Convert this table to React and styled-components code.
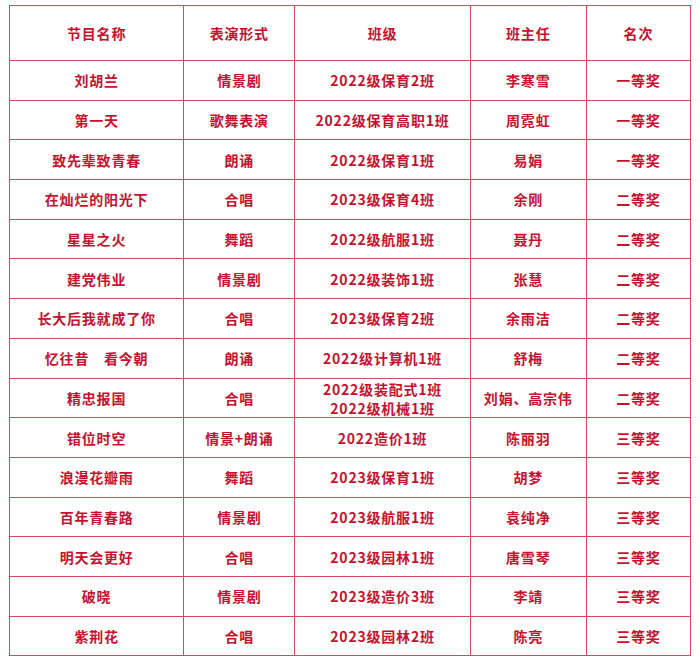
import React from 'react'
import styled, { createGlobalStyle } from 'styled-components'

const GlobalStyle = createGlobalStyle`
  body {
    margin: 0;
    background: #fff;
    font-family: "Noto Sans CJK SC", "Liberation Sans", sans-serif;
  }
`

const Page = styled.div`
  padding: 5px 0 0 9px;
`

const Table = styled.table`
  border-collapse: collapse;
  table-layout: fixed;
  width: 682px;
  color: #c8102e;
  font-size: 14px;
  letter-spacing: 0.8px;
`

const HeadCell = styled.th`
  height: 54px;
  border: 1.5px solid #d8475f;
  font-weight: 600;
  text-align: center;
  padding: 0;
`

const Cell = styled.td`
  height: ${p => p.$h}px;
  border: 1.5px solid #d8475f;
  text-align: center;
  padding: 0;
  font-weight: 600;
  line-height: 20px;
  white-space: nowrap;
`

const Line = styled.div`
  line-height: 20px;
  height: 19px;
`

const columns = [
  { title: '节目名称', width: 174 },
  { title: '表演形式', width: 111 },
  { title: '班级', width: 175 },
  { title: '班主任', width: 116 },
  { title: '名次', width: 104 },
]

const rows = [
  ['刘胡兰', '情景剧', '2022级保育2班', '李寒雪', '一等奖'],
  ['第一天', '歌舞表演', '2022级保育高职1班', '周霓虹', '一等奖'],
  ['致先辈致青春', '朗诵', '2022级保育1班', '易娟', '一等奖'],
  ['在灿烂的阳光下', '合唱', '2023级保育4班', '余刚', '二等奖'],
  ['星星之火', '舞蹈', '2022级航服1班', '聂丹', '二等奖'],
  ['建党伟业', '情景剧', '2022级装饰1班', '张慧', '二等奖'],
  ['长大后我就成了你', '合唱', '2023级保育2班', '余雨洁', '二等奖'],
  ['忆往昔　看今朝', '朗诵', '2022级计算机1班', '舒梅', '二等奖'],
  ['精忠报国', '合唱', ['2022级装配式1班', '2022级机械1班'], '刘娟、高宗伟', '二等奖'],
  ['错位时空', '情景+朗诵', '2022造价1班', '陈丽羽', '三等奖'],
  ['浪漫花瓣雨', '舞蹈', '2023级保育1班', '胡梦', '三等奖'],
  ['百年青春路', '情景剧', '2023级航服1班', '袁纯净', '三等奖'],
  ['明天会更好', '合唱', '2023级园林1班', '唐雪琴', '三等奖'],
  ['破晓', '情景剧', '2023级造价3班', '李靖', '三等奖'],
  ['紫荆花', '合唱', '2023级园林2班', '陈亮', '三等奖'],
]

export default function App() {
  return (
    <Page>
      <GlobalStyle />
      <Table>
        <colgroup>
          {columns.map(c => <col key={c.title} style={{ width: c.width }} />)}
        </colgroup>
        <thead>
          <tr>
            {columns.map(c => <HeadCell key={c.title}>{c.title}</HeadCell>)}
          </tr>
        </thead>
        <tbody>
          {rows.map((r, i) => (
            <tr key={i}>
              {r.map((v, j) => (
                <Cell key={j} $h={38.7}>
                  {Array.isArray(v) ? v.map(line => <Line key={line}>{line}</Line>) : v}
                </Cell>
              ))}
            </tr>
          ))}
        </tbody>
      </Table>
    </Page>
  )
}
